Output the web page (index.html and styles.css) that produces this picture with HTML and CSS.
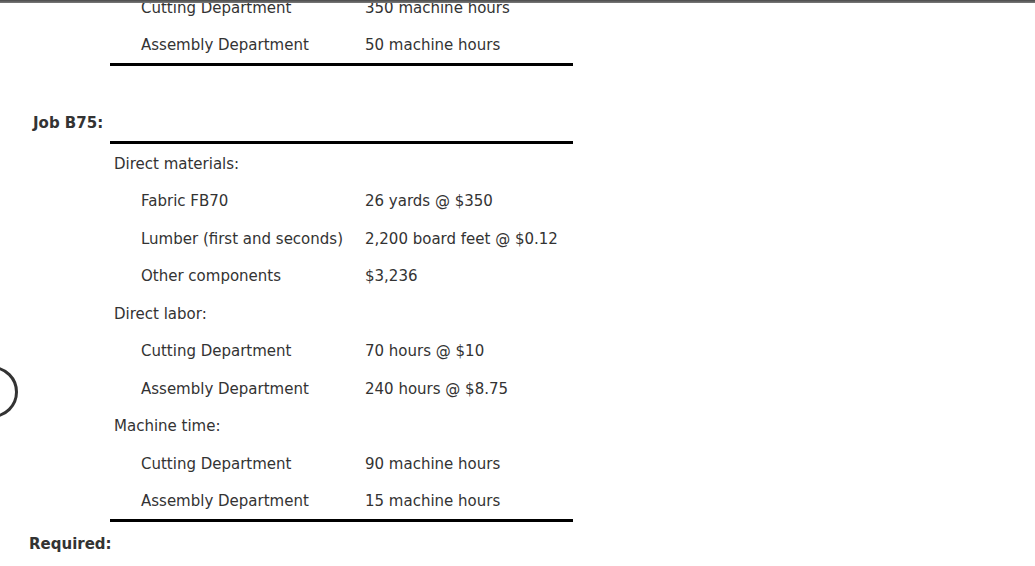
FILE: index.html
```html
<!DOCTYPE html>
<html>
<head>
<meta charset="utf-8">
<link rel="stylesheet" href="styles.css">
</head>
<body>
<div class="topbar"></div>
<div class="circle"></div>
<main class="page">
  <div class="sheet">
    <div class="row"><span class="cell item">Cutting Department</span><span class="cell val">350 machine hours</span></div>
    <div class="row"><span class="cell item">Assembly Department</span><span class="cell val">50 machine hours</span></div>
  </div>

  <div class="job-title">Job B75:</div>

  <div class="sheet top-rule">
    <div class="row"><span class="cell head">Direct materials:</span><span class="cell val"></span></div>
    <div class="row"><span class="cell item">Fabric FB70</span><span class="cell val">26 yards @ $350</span></div>
    <div class="row"><span class="cell item">Lumber (first and seconds)</span><span class="cell val">2,200 board feet @ $0.12</span></div>
    <div class="row"><span class="cell item">Other components</span><span class="cell val">$3,236</span></div>
    <div class="row"><span class="cell head">Direct labor:</span><span class="cell val"></span></div>
    <div class="row"><span class="cell item">Cutting Department</span><span class="cell val">70 hours @ $10</span></div>
    <div class="row"><span class="cell item">Assembly Department</span><span class="cell val">240 hours @ $8.75</span></div>
    <div class="row"><span class="cell head">Machine time:</span><span class="cell val"></span></div>
    <div class="row"><span class="cell item">Cutting Department</span><span class="cell val">90 machine hours</span></div>
    <div class="row"><span class="cell item">Assembly Department</span><span class="cell val">15 machine hours</span></div>
  </div>

  <div class="required">Required:</div>
</main>
</body>
</html>
```
FILE: styles.css
```css
html, body {
  margin: 0;
  padding: 0;
  background: #fff;
  overflow: hidden;
}
body {
  font-family: "DejaVu Sans", Verdana, sans-serif;
  font-size: 15px;
  color: #333;
}
.topbar {
  position: fixed;
  top: 0;
  left: 0;
  right: 0;
  height: 3px;
  background: linear-gradient(#4a4a4a, #7a7a7a);
  z-index: 5;
}
.circle {
  position: absolute;
  left: -34px;
  top: 366px;
  width: 46px;
  height: 46px;
  border: 3px solid #333;
  border-radius: 50%;
}
.page {
  margin-top: -12px;
}
.sheet {
  margin-left: 110px;
  width: 463px;
  border-bottom: 3px solid #000;
}
.top-rule {
  border-top: 3px solid #000;
}
.row {
  display: grid;
  grid-template-columns: 251px 1fr;
  height: 37.5px;
  align-items: center;
}
.cell {
  white-space: nowrap;
  line-height: 18px;
  padding-top: 2px;
}
.head {
  padding-left: 4px;
}
.item {
  padding-left: 31px;
}
.val {
  padding-left: 4px;
}
.job-title {
  height: 75px;
  box-sizing: border-box;
  padding-left: 33px;
  padding-top: 48px;
  font-weight: bold;
}
.required {
  padding-left: 29px;
  padding-top: 13px;
  font-weight: bold;
}
```
